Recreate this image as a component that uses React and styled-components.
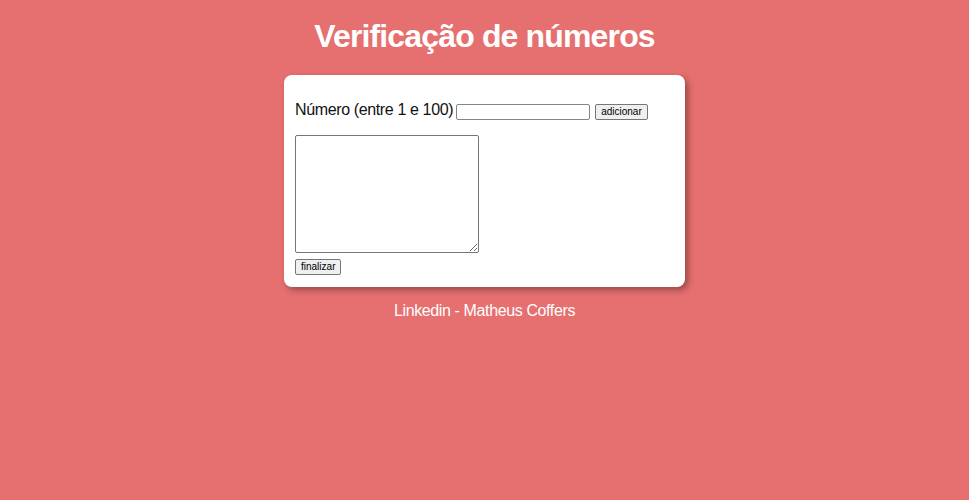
import styled, { createGlobalStyle } from "styled-components";

const Global = createGlobalStyle`
  html, body {
    margin: 0;
    min-height: 100%;
    background: #e66f6f;
    font-family: "Liberation Sans", Arial, sans-serif;
  }
`;

const Page = styled.main`
  display: flex;
  flex-direction: column;
  align-items: center;
  min-height: 500px;
`;

const Title = styled.h1`
  margin: 18px 0 20px;
  font-size: 32px;
  font-weight: 700;
  letter-spacing: -0.85px;
  color: #fff;
`;

const Card = styled.section`
  box-sizing: border-box;
  width: 401px;
  padding: 26px 11px 12px;
  background: #fff;
  border-radius: 8px;
  box-shadow: 3px 3px 6px rgba(0, 0, 0, 0.35);
`;

const Row = styled.div`
  display: flex;
  align-items: center;
  height: 18px;
  margin-bottom: 16px;
  font-size: 16px;
  letter-spacing: -0.37px;
  color: #111;
`;

const Label = styled.label`
  margin-right: 3px;
`;

const NumberInput = styled.input`
  box-sizing: border-box;
  width: 134px;
  height: 16px;
  margin: 4px 5px 0 0;
  padding: 0 2px;
  border: 1px solid #858585;
  border-radius: 2px;
`;

const Actions = styled.div`
  display: flex;
`;

const Button = styled.button`
  box-sizing: border-box;
  height: 16px;
  padding: 0 5px;
  margin-top: ${(p) => (p.$top ? "4px" : "0")};
  font-family: "Liberation Sans", Arial, sans-serif;
  font-size: 10px;
  letter-spacing: 0;
  line-height: 14px;
  color: #000;
  background: #efefef;
  border: 1px solid #767676;
  border-radius: 2px;
`;

const List = styled.textarea`
  display: block;
  box-sizing: border-box;
  width: 184px;
  height: 118px;
  margin: 0 0 6px;
  border: 1px solid #767676;
  border-radius: 2px;
`;

const Footer = styled.a`
  margin-top: 15px;
  font-size: 16px;
  letter-spacing: -0.38px;
  color: #fff;
  text-decoration: none;
`;

export default function App() {
  return (
    <Page>
      <Global />
      <Title>Verificação de números</Title>
      <Card>
        <Row>
          <Label htmlFor="num">Número (entre 1 e 100)</Label>
          <NumberInput id="num" type="number" />
          <Button $top>adicionar</Button>
        </Row>
        <List />
        <Actions>
          <Button>finalizar</Button>
        </Actions>
      </Card>
      <Footer href="#">Linkedin - Matheus Coffers</Footer>
    </Page>
  );
}
